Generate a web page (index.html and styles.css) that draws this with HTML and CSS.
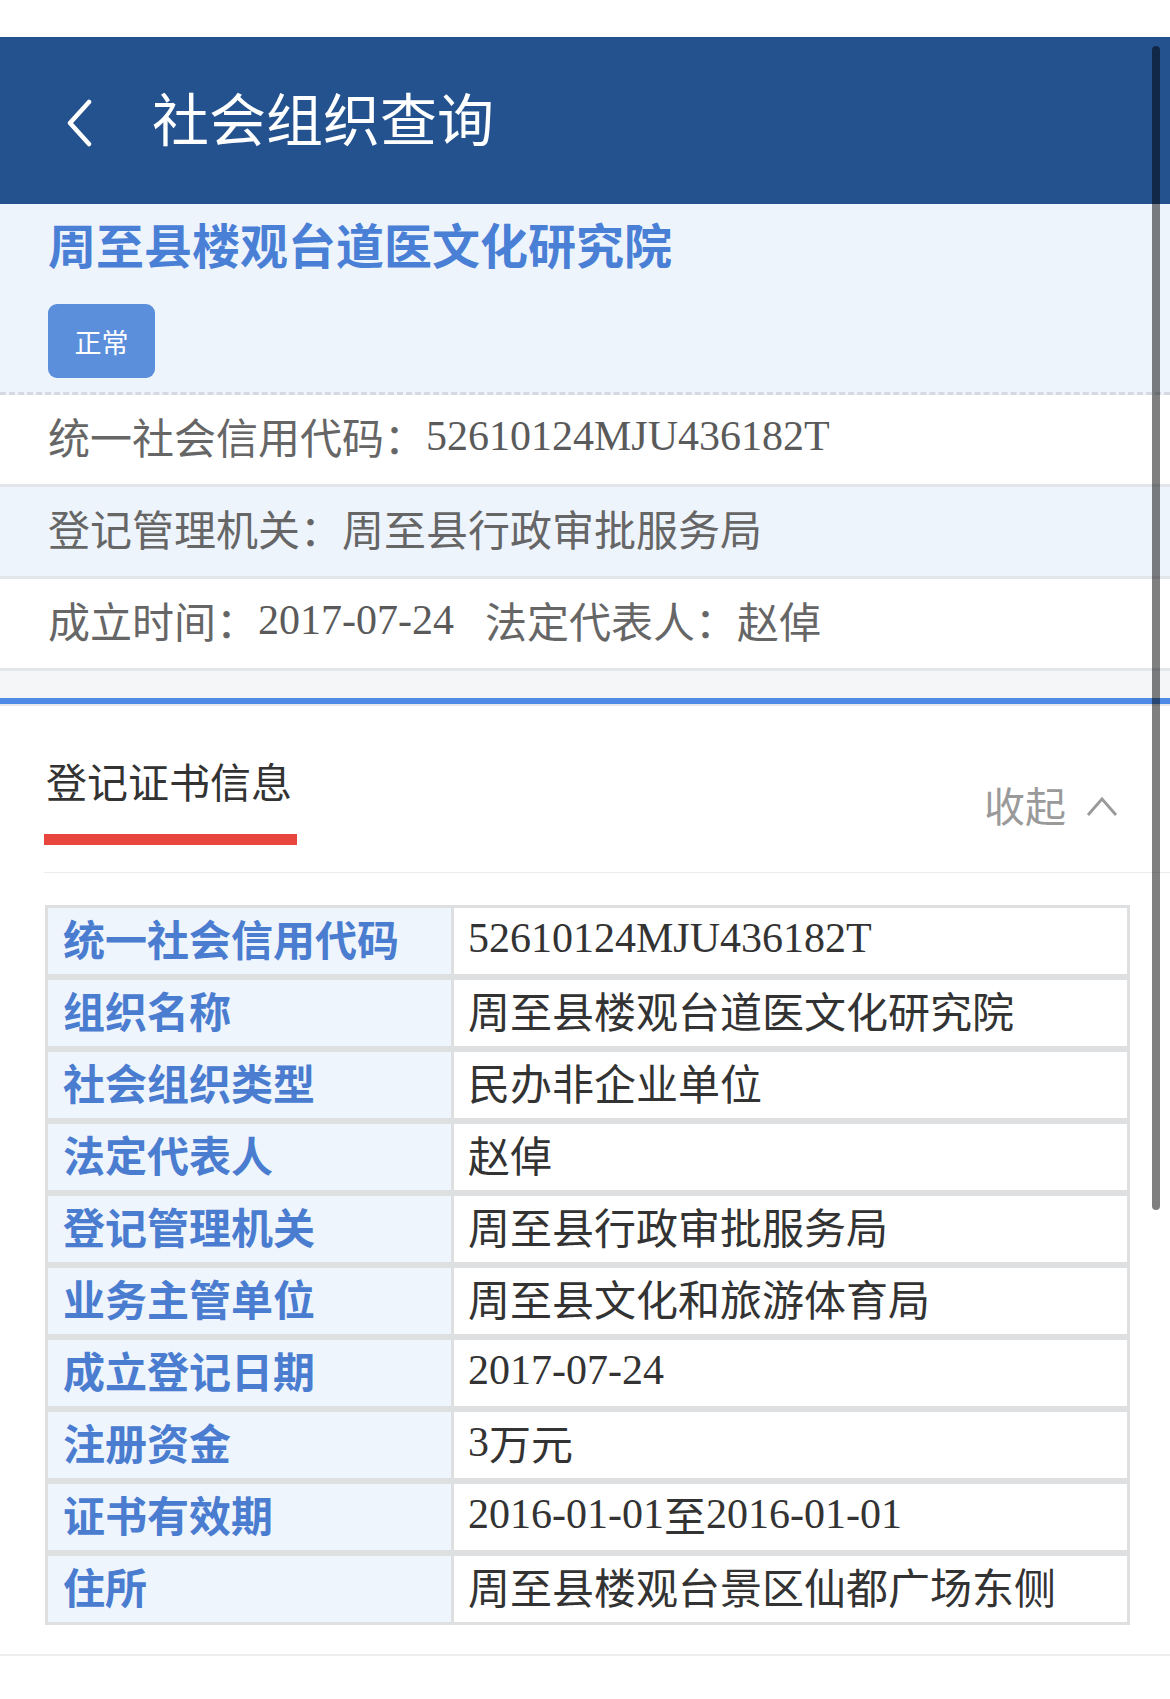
FILE: index.html
```html
<!DOCTYPE html>
<html lang="zh-CN">
<head>
    <meta charset="UTF-8">
    <meta name="viewport" content="width=device-width, initial-scale=1.0">
    <title>社会组织查询</title>
    <link rel="stylesheet" href="styles.css">
</head>
<body>

    <div class="status-bar"></div>

    <!-- top navigation -->
    <div class="nav">
        <svg class="back" width="26" height="48" viewBox="0 0 26 48">
            <polyline points="23,3 4,24 23,45" fill="none" stroke="#fff" stroke-width="4.5" stroke-linecap="round" stroke-linejoin="round"/>
        </svg>
        <span class="nav-title">社会组织查询</span>
    </div>

    <!-- summary card -->
    <div class="summary">
        <div class="org-name">周至县楼观台道医文化研究院</div>
        <span class="badge">正常</span>
    </div>
    <div class="info-row">统一社会信用代码：<span class="num">52610124MJU436182T</span></div>
    <div class="info-row alt">登记管理机关：周至县行政审批服务局</div>
    <div class="info-row">成立时间：<span class="num">2017-07-24</span><span class="rep">法定代表人：赵倬</span></div>
    <div class="gap-band"></div>
    <div class="blue-line"></div>

    <!-- certificate info -->
    <div class="cert">
        <div class="cert-head">
            <div>
                <div class="cert-title">登记证书信息</div>
                <div class="red-bar"></div>
            </div>
            <div class="collapse">
                收起
                <svg width="32" height="22" viewBox="0 0 32 22">
                    <polyline points="2,20 16,4 30,20" fill="none" stroke="#9a9a9a" stroke-width="2.8" stroke-linejoin="miter"/>
                </svg>
            </div>
        </div>

        <div class="cert-table">
            <div class="label">统一社会信用代码</div>
            <div class="value"><span class="num">52610124MJU436182T</span></div>
            <div class="label">组织名称</div>
            <div class="value">周至县楼观台道医文化研究院</div>
            <div class="label">社会组织类型</div>
            <div class="value">民办非企业单位</div>
            <div class="label">法定代表人</div>
            <div class="value">赵倬</div>
            <div class="label">登记管理机关</div>
            <div class="value">周至县行政审批服务局</div>
            <div class="label">业务主管单位</div>
            <div class="value">周至县文化和旅游体育局</div>
            <div class="label">成立登记日期</div>
            <div class="value"><span class="num">2017-07-24</span></div>
            <div class="label">注册资金</div>
            <div class="value"><span class="num">3</span>万元</div>
            <div class="label">证书有效期</div>
            <div class="value"><span class="num">2016-01-01</span>至<span class="num">2016-01-01</span></div>
            <div class="label">住所</div>
            <div class="value">周至县楼观台景区仙都广场东侧</div>
        </div>
    </div>
    <div class="bottom-line"></div>

    <div class="scrollbar"></div>
</body>
</html>
```

FILE: styles.css
```css
/* page */
body {
    margin: 0;
    width: 1170px;
    min-height: 1699px;
    background-color: #fff;
    font-family: "Noto Sans CJK SC", "Noto Sans", sans-serif;
    position: relative;
    overflow: hidden;
}

.status-bar {
    height: 37px;
    background-color: #fff;
}

.nav {
    height: 167px;
    background-color: #23528e;
    display: flex;
    align-items: center;
    padding-left: 66px;
}

.back {
    display: block;
    margin-top: 4px;
}

.nav-title {
    margin-left: 60px;
    margin-bottom: 8px;
    font-size: 57px;
    line-height: 1;
    color: #fff;
}

/* summary */
.summary {
    background-color: #eef4fc;
    padding: 11px 0 14px 48px;
    border-bottom: 3px dashed #d6dae0;
}

.org-name {
    font-size: 48px;
    line-height: 56px;
    font-weight: bold;
    color: #4a7fd6;
}

.badge {
    display: inline-flex;
    align-items: center;
    justify-content: center;
    margin-top: 33px;
    width: 107px;
    height: 74px;
    border-radius: 9px;
    background-color: #5b8edb;
    color: #fff;
    font-size: 27px;
}

.info-row {
    height: 81px;
    padding-bottom: 8px;
    display: flex;
    align-items: center;
    padding-left: 48px;
    font-size: 42px;
    color: #666;
    border-bottom: 3px solid #e2e5ea;
}

.info-row.alt {
    background-color: #eef4fc;
}

.num {
    font-family: "Liberation Serif", "Noto Sans CJK SC", serif;
}

.info-row .num {
    color: #5a5a5a;
}

.rep {
    margin-left: 31px;
}

.gap-band {
    height: 27px;
    background-color: #f5f6f8;
}

.blue-line {
    height: 6px;
    background-color: #4f8ae6;
    border-bottom: 2px solid #e6e8eb;
}

/* certificate */
.cert-head {
    margin-left: 44px;
    padding-top: 46px;
    display: flex;
    justify-content: space-between;
    border-bottom: 1px solid #ececec;
}

.cert-title {
    font-size: 41px;
    line-height: 56px;
    color: #333;
    padding-left: 2px;
}

.red-bar {
    margin-top: 26px;
    margin-bottom: 27px;
    width: 253px;
    height: 11px;
    background-color: #e8463d;
}

.collapse {
    display: flex;
    align-items: center;
    margin-top: 24px;
    margin-right: 52px;
    height: 56px;
    font-size: 41px;
    color: #9a9a9a;
}

.collapse svg {
    margin-left: 20px;
    margin-top: 4px;
}

.cert-table {
    margin: 32px 0 0 45px;
    width: 1079px;
    display: grid;
    grid-template-columns: 403px 1fr;
    grid-auto-rows: 66px;
    gap: 6px 3px;
    padding: 3px;
    background-color: #dedfe1;
}

.label,
.value {
    display: flex;
    align-items: center;
    padding-bottom: 7px;
    font-size: 42px;
}

.label {
    background-color: #eff5fd;
    padding-left: 15px;
    font-weight: bold;
    color: #4a7cd0;
}

.value {
    background-color: #fff;
    padding-left: 14px;
    color: #333;
}

.bottom-line {
    margin-top: 29px;
    height: 2px;
    background-color: #eeeeee;
}

/* scroll indicator overlay */
.scrollbar {
    position: absolute;
    left: 1152px;
    top: 46px;
    width: 8px;
    height: 1164px;
    border-radius: 4px;
    background-color: rgba(0, 0, 0, 0.5);
}
```
